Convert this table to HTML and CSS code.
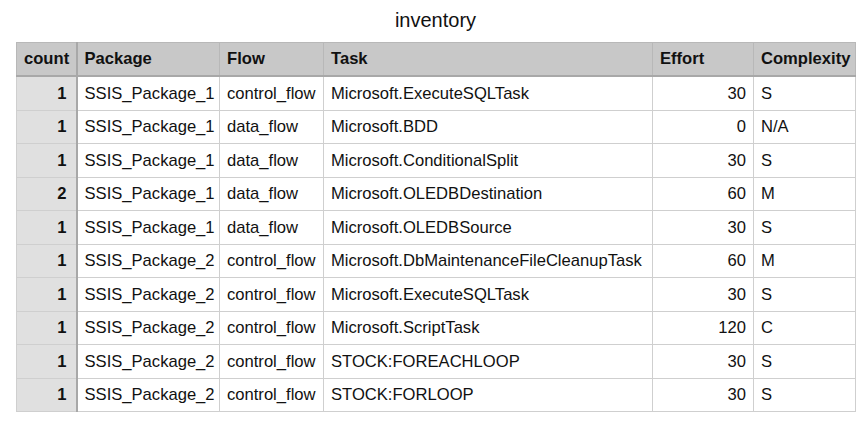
FILE: index.html
```html
<!DOCTYPE html>
<html>
<head>
<meta charset="utf-8">
<link rel="stylesheet" href="styles.css">
</head>
<body>
<div class="page">
  <div class="title">inventory</div>
  <table class="grid">
    <colgroup>
      <col class="c-count"><col class="c-pkg"><col class="c-flow"><col class="c-task"><col class="c-effort"><col class="c-cx">
    </colgroup>
    <thead>
      <tr><th class="cnt">count</th><th>Package</th><th>Flow</th><th>Task</th><th>Effort</th><th>Complexity</th></tr>
    </thead>
    <tbody>
      <tr><td class="cnt">1</td><td>SSIS_Package_1</td><td>control_flow</td><td>Microsoft.ExecuteSQLTask</td><td class="num">30</td><td>S</td></tr>
      <tr><td class="cnt">1</td><td>SSIS_Package_1</td><td>data_flow</td><td>Microsoft.BDD</td><td class="num">0</td><td>N/A</td></tr>
      <tr><td class="cnt">1</td><td>SSIS_Package_1</td><td>data_flow</td><td>Microsoft.ConditionalSplit</td><td class="num">30</td><td>S</td></tr>
      <tr><td class="cnt">2</td><td>SSIS_Package_1</td><td>data_flow</td><td>Microsoft.OLEDBDestination</td><td class="num">60</td><td>M</td></tr>
      <tr><td class="cnt">1</td><td>SSIS_Package_1</td><td>data_flow</td><td>Microsoft.OLEDBSource</td><td class="num">30</td><td>S</td></tr>
      <tr><td class="cnt">1</td><td>SSIS_Package_2</td><td>control_flow</td><td>Microsoft.DbMaintenanceFileCleanupTask</td><td class="num">60</td><td>M</td></tr>
      <tr><td class="cnt">1</td><td>SSIS_Package_2</td><td>control_flow</td><td>Microsoft.ExecuteSQLTask</td><td class="num">30</td><td>S</td></tr>
      <tr><td class="cnt">1</td><td>SSIS_Package_2</td><td>control_flow</td><td>Microsoft.ScriptTask</td><td class="num">120</td><td>C</td></tr>
      <tr><td class="cnt">1</td><td>SSIS_Package_2</td><td>control_flow</td><td>STOCK:FOREACHLOOP</td><td class="num">30</td><td>S</td></tr>
      <tr><td class="cnt">1</td><td>SSIS_Package_2</td><td>control_flow</td><td>STOCK:FORLOOP</td><td class="num">30</td><td>S</td></tr>
    </tbody>
  </table>
</div>
</body>
</html>
```

FILE: styles.css
```css
html, body {
  margin: 0;
  padding: 0;
  background: #ffffff;
}
body {
  font-family: "Liberation Sans", Arial, sans-serif;
  color: #111111;
}
.page {
  padding: 8px 0 0 16px;
}
.title {
  width: 839px;
  text-align: center;
  font-size: 20px;
  line-height: 24px;
  height: 34px;
}
.grid {
  border-collapse: collapse;
  table-layout: fixed;
  width: 839px;
  font-size: 16.6px;
}
.c-count { width: 60px; }
.c-pkg { width: 143px; }
.c-flow { width: 104px; }
.c-task { width: 329px; }
.c-effort { width: 101px; }
.c-cx { width: 102px; }
.grid th, .grid td {
  border: 1px solid #cfcfcf;
  padding: 0 7px;
  white-space: nowrap;
  overflow: hidden;
  text-align: left;
}
.grid th {
  height: 32px;
  background: #c8c8c8;
  font-weight: bold;
  border-color: #b8b8b8;
  border-bottom: 2px solid #a8a8a8;
}
.grid td {
  height: 32px;
  background: #ffffff;
}
.grid tbody tr:nth-child(odd) td { height: 33px; }
.grid .cnt {
  border-right: 2px solid #a8a8a8;
}
.grid td.cnt {
  background: #e0e0e0;
  text-align: right;
  font-weight: bold;
  padding-right: 9px;
}
.grid td.num {
  text-align: right;
  padding-right: 7px;
}
```
